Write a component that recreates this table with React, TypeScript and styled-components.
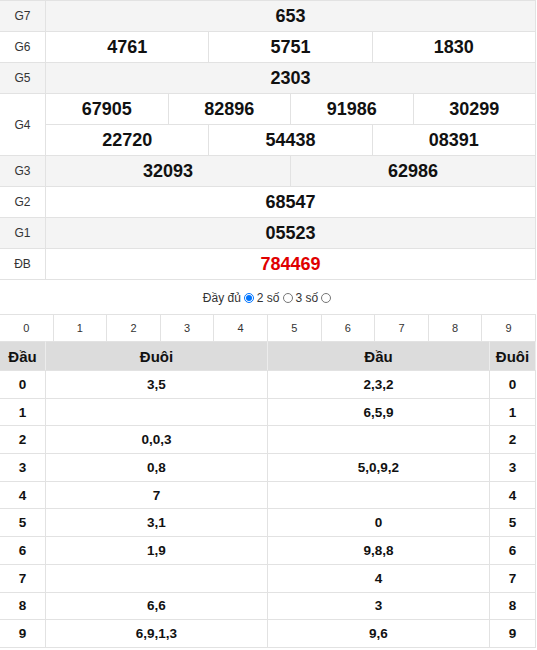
import React from "react";
import styled, { createGlobalStyle } from "styled-components";

const Global = createGlobalStyle`
  html, body { margin: 0; padding: 0; background: #fff; }
  body { font-family: "Liberation Sans", Arial, sans-serif; color: #222; }
`;

const BORDER = "#e2e2e2";

const Page = styled.div`
  width: 536px;
`;

const PrizeTable = styled.div`
  border-top: 1px solid ${BORDER};
`;

const PrizeRow = styled.div<{ $shade: boolean }>`
  display: flex;
  border-bottom: 1px solid ${BORDER};
  background: ${(p) => (p.$shade ? "#f4f4f4" : "#fff")};
`;

const Label = styled.div`
  width: 46px;
  flex: none;
  box-sizing: border-box;
  border-right: 1px solid ${BORDER};
  display: flex;
  align-items: center;
  justify-content: center;
  font-size: 12px;
  color: #333;
`;

const Values = styled.div`
  flex: 1;
  display: flex;
  flex-direction: column;
`;

const ValueLine = styled.div`
  display: flex;
  height: 30px;
  & + & {
    border-top: 1px solid ${BORDER};
  }
`;

const Value = styled.div<{ $red?: boolean }>`
  flex: 1;
  border-right: 1px solid ${BORDER};
  display: flex;
  align-items: center;
  justify-content: center;
  font-size: 18px;
  font-weight: bold;
  color: ${(p) => (p.$red ? "#e00000" : "#111")};
`;

const Options = styled.div`
  height: 34px;
  display: flex;
  align-items: center;
  justify-content: center;
  font-size: 12px;
  color: #333;
  padding-left: 1px;
  padding-top: 1px;
  box-sizing: border-box;
`;

const Radio = styled.input`
  width: 10px;
  height: 10px;
  margin: 0 3px 0 3px;
`;

const DigitRow = styled.div`
  display: flex;
  border-top: 1px solid ${BORDER};
  height: 26px;
`;

const Digit = styled.div`
  flex: 1;
  border-right: 1px solid ${BORDER};
  display: flex;
  align-items: center;
  justify-content: center;
  font-size: 11px;
  color: #333;
`;

const LotoTable = styled.div`
  display: grid;
  grid-template-columns: 46px 222px 222px 46px;
`;

const HeadCell = styled.div`
  height: 28px;
  background: #dcdcdc;
  border-right: 1px solid #ececec;
  border-top: 1px solid ${BORDER};
  display: flex;
  align-items: center;
  justify-content: center;
  font-size: 15px;
  font-weight: bold;
  color: #111;
`;

const Cell = styled.div`
  height: 26.7px;
  border-right: 1px solid ${BORDER};
  border-top: 1px solid ${BORDER};
  display: flex;
  align-items: center;
  justify-content: center;
  font-size: 13.5px;
  font-weight: bold;
  color: #111;
  &:nth-last-child(-n + 4) {
    border-bottom: 1px solid ${BORDER};
  }
`;

const prizes: { label: string; lines: string[][]; red?: boolean }[] = [
  { label: "G7", lines: [["653"]] },
  { label: "G6", lines: [["4761", "5751", "1830"]] },
  { label: "G5", lines: [["2303"]] },
  { label: "G4", lines: [["67905", "82896", "91986", "30299"], ["22720", "54438", "08391"]] },
  { label: "G3", lines: [["32093", "62986"]] },
  { label: "G2", lines: [["68547"]] },
  { label: "G1", lines: [["05523"]] },
  { label: "ĐB", lines: [["784469"]], red: true },
];

const loto: [string, string][] = [
  ["3,5", "2,3,2"],
  ["", "6,5,9"],
  ["0,0,3", ""],
  ["0,8", "5,0,9,2"],
  ["7", ""],
  ["3,1", "0"],
  ["1,9", "9,8,8"],
  ["", "4"],
  ["6,6", "3"],
  ["6,9,1,3", "9,6"],
];

export default function App() {
  return (
    <Page>
      <Global />
      <PrizeTable>
        {prizes.map((p, i) => (
          <PrizeRow key={p.label} $shade={i % 2 === 0}>
            <Label>{p.label}</Label>
            <Values>
              {p.lines.map((line, j) => (
                <ValueLine key={j}>
                  {line.map((v) => (
                    <Value key={v} $red={p.red}>
                      {v}
                    </Value>
                  ))}
                </ValueLine>
              ))}
            </Values>
          </PrizeRow>
        ))}
      </PrizeTable>
      <Options>
        Đầy đủ
        <Radio type="radio" name="mode" defaultChecked />
        2 số
        <Radio type="radio" name="mode" />
        3 số
        <Radio type="radio" name="mode" />
      </Options>
      <DigitRow>
        {Array.from({ length: 10 }, (_, i) => (
          <Digit key={i}>{i}</Digit>
        ))}
      </DigitRow>
      <LotoTable>
        <HeadCell>Đầu</HeadCell>
        <HeadCell>Đuôi</HeadCell>
        <HeadCell>Đầu</HeadCell>
        <HeadCell>Đuôi</HeadCell>
        {loto.map(([tail, head], i) => (
          <React.Fragment key={i}>
            <Cell>{i}</Cell>
            <Cell>{tail}</Cell>
            <Cell>{head}</Cell>
            <Cell>{i}</Cell>
          </React.Fragment>
        ))}
      </LotoTable>
    </Page>
  );
}
